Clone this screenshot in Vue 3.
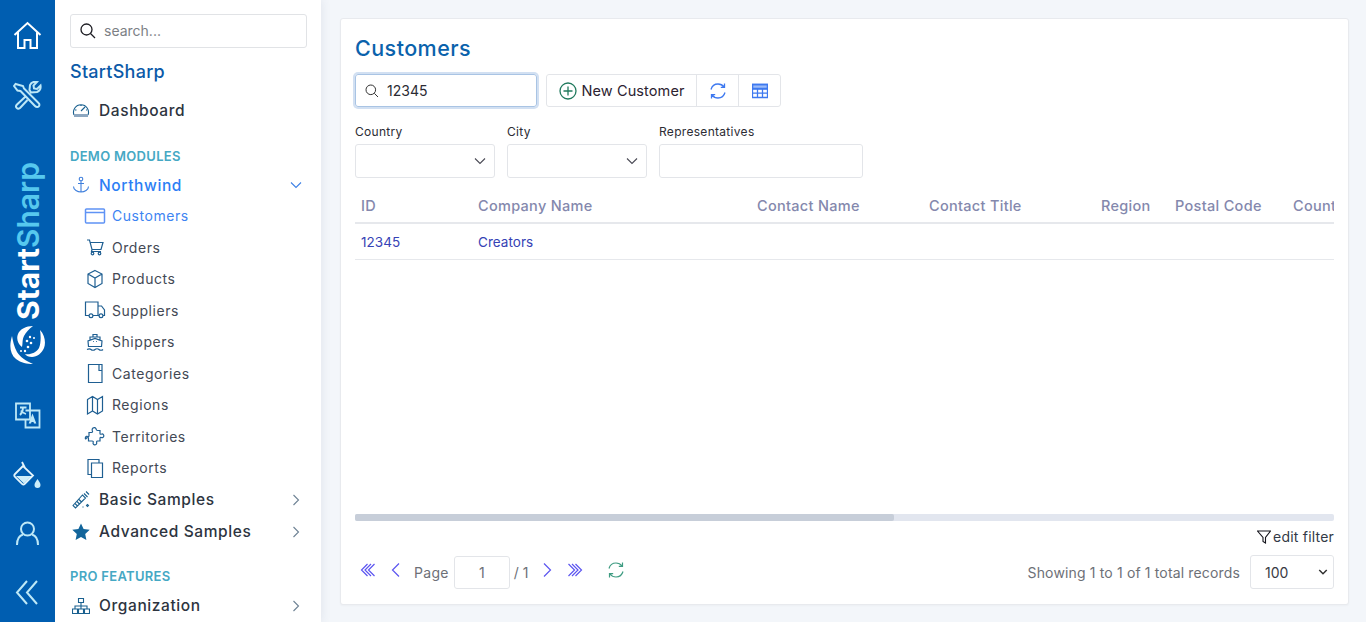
<script setup>
const subItems = [
  { label: 'Customers', active: true, d: 'M1.500 3h17a1 1 0 0 1 1 1v12a1 1 0 0 1-1 1h-17a1 1 0 0 1-1-1V4a1 1 0 0 1 1-1zM.5 6.500h19' },
  { label: 'Orders', d: 'M2 3h2.500l2.500 9.500h9l2-7H5M7 12.500l-.5 2H16', circles: [[7.500, 16.500, 1.300], [14.500, 16.500, 1.300]] },
  { label: 'Products', d: 'M10 1.500l7 3.500v9.500l-7 4-7-4V5zM3 5l7 4 7-4M10 9v9.500' },
  { label: 'Suppliers', d: 'M4 15.500H.5V2h12.500v13.500H8M13 6h3.500l3 4v5.500H18M13 15.500h1', circles: [[6, 15.800, 1.900], [16, 15.800, 1.900]] },
  { label: 'Shippers', d: 'M3.500 14.500L3 9l7-2.500L17 9l-.5 5.500zM5 8V5h10v3M8 5V2.500h4V5M8 9.500h.8M11.200 9.500h.8M2 17.500c2-1 3-1 4 0s3 1 4 0 3-1 4 0 3 1 4 0' },
  { label: 'Categories', d: 'M3.500 1.500h13.500v18H3.500zM14 1.500v6h3' },
  { label: 'Regions', d: 'M2.500 4.500l5-3 5 3 5-3V16l-5 3-5-3-5 3zM7.500 1.500V16M12.500 4.500V19' },
  { label: 'Territories', d: 'M8 2c1-.8 2.500-.5 3 .8.400 1 .2 1.700 1.500 1.700h2.500v3c0 1 1 .8 1.800.5 1.400-.3 2.200 1 2 2.200-.2 1.300-1.500 1.800-2.500 1.300-.8-.4-1.300 0-1.300 1v2.500h-2.500c-1 0-1 1-.8 1.800.2 1.300-1 2.200-2.200 2-1.300-.2-1.800-1.500-1.300-2.600.3-.8-.2-1.200-1-1.200H3.500v-2.500c0-1-1-1-1.700-.7C.5 14 0 12.500.5 11.300c.4-1 1.500-1.300 2.300-.8.700.4 1.200 0 1.200-.8V6.500h2.500c1.200 0 1.200-1 .8-1.800C6.900 3.800 7.200 2.700 8 2z' },
  { label: 'Reports', d: 'M6.500 16.500H3V1.500h11V5M6.500 5h11v14.500h-11z' },
]
const columns = [
  { title: 'ID', width: 117 },
  { title: 'Company Name', width: 279 },
  { title: 'Contact Name', width: 172 },
  { title: 'Contact Title', width: 172 },
  { title: 'Region', width: 74 },
  { title: 'Postal Code', width: 118 },
  { title: 'Country', width: 100 },
]
</script>

<template>
  <div class="app">
    <aside class="rail">
      <svg class="rail-ico home" viewBox="0 0 29 29"><path d="M1.500 14L14.500 2l13 12M5 11.500V27h6.500v-8h6v8H24V11.500" /></svg>
      <svg class="rail-ico tools" viewBox="0 0 29 29"><path d="M2.500 3L1 5l3.500 4.500 3 .5L22 25c3 3 6-1 3.500-3L11 7.500 10 5zM18 11.500l6-.5c2.500-1 4-3.500 3.500-6.500L24 8l-3-.5-.5-3L24 1c-3-.5-6 .5-7 3l-.5 5zM12 16L4 23.500c-2.500 2.500.5 5.500 3 3.500l7.500-8" /></svg>
      <div class="brand">
        <span class="brand-text"><b>Start</b><em>Sharp</em></span>
        <svg class="swirl" viewBox="0 0 36 38"><path d="M2 10C-1 20 0 28 6 33c5 4 11 5 17 5-7-3-13-7-16-12C4 21 3 15 2 10zM23 0C16 0 10 3 8 8c-2 5 0 10 4 13 1-4 0-7 2-11 2-4 5-7 9-10zM30 4c5 5 6 13 4 18-2 5-7 9-12 9-3 0-6-1-7-3 5 1 11-1 14-6 2-5 2-12 1-18z" /><circle cx="20" cy="11" r="1.200" /><circle cx="24" cy="12" r="1" /><circle cx="17" cy="15" r="1.300" /><circle cx="21" cy="17" r="1.300" /><circle cx="18" cy="21" r="1.300" /><circle cx="15" cy="25" r="1.200" /><circle cx="11" cy="25" r="1" /></svg>
      </div>
      <svg class="rail-ico lang" viewBox="0 0 29 29"><path d="M3 2.500h14v16H3zM12.500 9.500h14v17h-14v-8M7 6.500h6.500M10 6.500c0 3-1 5.500-3 7.500M8 9.500c1 2 3 3 5 3.500" /><path class="solid" d="M19.500 12.500l3.800 10h-2.300l-.5-1.500h-2l-.5 1.500h-2.300z" /></svg>
      <svg class="rail-ico paint" viewBox="0 0 29 29"><path class="solid" d="M3 15h15.500l-7.500 7.500zM24.500 18c2 3 3 4.500 3 6a3 3 0 0 1-6 0c0-1.500 1-3 3-6z" /><path d="M10 5L2 13c-.8.8-.8 2 0 2.800l7 7c.8.8 2 .8 2.800 0L20 14.500zM9 1l3 6" /></svg>
      <svg class="rail-ico user" viewBox="0 0 29 29"><circle cx="14.500" cy="10" r="6.500" /><path d="M4 26c0-6 2.500-9.500 6-10.500M25 26c0-6-2.500-9.500-6-10.500" /></svg>
      <svg class="rail-ico back" viewBox="0 0 29 29"><path d="M14 3L4 14.500 14 26M24 3L14 14.500 24 26" /></svg>
    </aside>

    <nav class="side">
      <div class="side-search">
        <svg class="search-ico" viewBox="0 0 16 16"><circle cx="6.500" cy="6.500" r="5.500" /><path d="M10.500 10.500L15 15" /></svg>
        <span>search...</span>
      </div>
      <div class="side-title">StartSharp</div>
      <div class="row top dash">
        <svg class="top-ico" viewBox="0 0 18 18"><path d="M2 14A7.500 7.500 0 1 1 16 14M9 10l4-4M3 9h1.500M9 3.500V5M14 9h1" /><path class="fill" d="M2 13h14v3H2z" /></svg>
        <span>Dashboard</span>
      </div>
      <div class="section demo">DEMO MODULES</div>
      <div class="row top open">
        <svg class="top-ico" viewBox="0 0 18 18"><circle cx="9" cy="3" r="1.800" /><path d="M9 5v11M6 7.500h6M1.500 10.500c0 3.500 4 5.500 7.500 5.500s7.500-2 7.500-5.500" /></svg>
        <span>Northwind</span>
        <svg class="chev" viewBox="0 0 12 12"><path d="M1 3.500L6 8.500 11 3.500" /></svg>
      </div>
      <div v-for="item in subItems" :key="item.label" class="row sub" :class="{ active: item.active }">
        <svg class="sub-ico" viewBox="0 0 20 20">
          <path :d="item.d" />
          <circle v-for="c in item.circles || []" :key="c[0]" :cx="c[0]" :cy="c[1]" :r="c[2]" />
        </svg>
        <span>{{ item.label }}</span>
      </div>
      <div class="row top basic">
        <svg class="top-ico" viewBox="0 0 18 18"><path d="M1 14.500L10.500 4l3 3L3.500 17zM3 12.500l2.500 2.500M5 10.500l2.500 2.500M7 8.500l2.500 2.500M12 2.500l3.500 3.500M14 .5l3 3M14.500 14.500l1-1 1 1-1 1zM11 15.500v1" /></svg>
        <span>Basic Samples</span>
        <svg class="chev" viewBox="0 0 12 12"><path d="M3.500 1L8.500 6 3.500 11" /></svg>
      </div>
      <div class="row top adv">
        <svg class="top-ico star" viewBox="0 0 18 18"><path d="M9 .5l2.600 5.600 6.100.7-4.500 4.200 1.200 6L9 14l-5.400 3 1.200-6L.3 6.800l6.100-.7z" /></svg>
        <span>Advanced Samples</span>
        <svg class="chev" viewBox="0 0 12 12"><path d="M3.500 1L8.500 6 3.500 11" /></svg>
      </div>
      <div class="section pro">PRO FEATURES</div>
      <div class="row top org">
        <svg class="top-ico" viewBox="0 0 18 18"><path d="M6.500 1.500h5v4h-5zM.5 12h5v4.500h-5zM6.500 12h5v4.500h-5zM12.500 12h5v4.500h-5zM9 5.500V12M3 12V9h12v3" /></svg>
        <span>Organization</span>
        <svg class="chev" viewBox="0 0 12 12"><path d="M3.500 1L8.500 6 3.500 11" /></svg>
      </div>
    </nav>

    <main class="main">
      <section class="card">
        <h1 class="title">Customers</h1>
        <div class="toolbar">
          <div class="quick">
            <svg viewBox="0 0 14 14"><circle cx="5.800" cy="5.800" r="4.800" /><path d="M9.300 9.300L13 13" /></svg>
            <span>12345</span>
          </div>
          <div class="btns">
            <div class="btn new">
              <svg viewBox="0 0 18 18"><circle cx="9" cy="9" r="8" /><path d="M9 4.500v9M4.500 9h9" /></svg>
              <span>New Customer</span>
            </div>
            <div class="btn ico">
              <svg viewBox="0 0 16 16"><path d="M1 6.500C2 3 5 1 8 1c2.500 0 4.500 1 6 3M14.500.500V4.300H10.800M15 9.500c-1 3.500-4 5.500-7 5.500-2.500 0-4.500-1-6-3M1.500 15.500V11.700H5.200" /></svg>
            </div>
            <div class="btn ico">
              <svg viewBox="0 0 16 14"><path class="head" d="M.5.500h15v4H.5z" /><path d="M.5.500h15v13H.5zM.5 5h15M.5 9.200h15M5.500 5v8.500M10.500 5v8.500" /></svg>
            </div>
          </div>
        </div>
        <div class="filters">
          <div class="field w140">
            <label>Country</label>
            <div class="box"><svg viewBox="0 0 12 8"><path d="M1 1.500L6 6.500 11 1.500" /></svg></div>
          </div>
          <div class="field w140">
            <label>City</label>
            <div class="box"><svg viewBox="0 0 12 8"><path d="M1 1.500L6 6.500 11 1.500" /></svg></div>
          </div>
          <div class="field w204">
            <label>Representatives</label>
            <div class="box"></div>
          </div>
        </div>
        <div class="grid">
          <div class="grid-head">
            <div v-for="col in columns" :key="col.title" class="cell" :style="{ width: col.width + 'px' }">{{ col.title }}</div>
          </div>
          <div class="grid-row">
            <div class="cell link" style="width: 117px">12345</div>
            <div class="cell link" style="width: 279px">Creators</div>
          </div>
          <div class="grid-body"></div>
          <div class="hscroll"><div class="thumb"></div></div>
        </div>
        <div class="edit-filter">
          <svg viewBox="0 0 14 14"><path d="M.5 1h13L8.500 7.500V13L6 11.500v-4z" /></svg>
          <span>edit filter</span>
        </div>
        <div class="pager">
          <div class="pager-left">
            <svg class="pg dbl" viewBox="0 0 16 16"><path d="M7.500 2L1.500 8l6 6M11 2L5 8l6 6M14.500 2l-6 6 6 6" /></svg>
            <svg class="pg one" viewBox="0 0 16 16"><path d="M11 1.500L4.500 8l6.500 6.500" /></svg>
            <span class="pg-label">Page</span>
            <div class="pg-input">1</div>
            <span class="pg-of">/ 1</span>
            <svg class="pg one next" viewBox="0 0 16 16"><path d="M5 1.500L11.500 8 5 14.500" /></svg>
            <svg class="pg dbl last" viewBox="0 0 16 16"><path d="M1.500 2l6 6-6 6M5 2l6 6-6 6M8.500 2l6 6-6 6" /></svg>
            <svg class="pg reload" viewBox="0 0 16 16"><path d="M1 6.500C2 3 5 1 8 1c2.500 0 4.500 1 6 3M14.500.500V4.300H10.800M15 9.500c-1 3.500-4 5.500-7 5.500-2.500 0-4.500-1-6-3M1.500 15.500V11.700H5.200" /></svg>
          </div>
          <div class="pager-right">
            <span class="stats">Showing 1 to 1 of 1 total records</span>
            <div class="size">
              <span>100</span>
              <svg viewBox="0 0 12 8"><path d="M1.500 1.500L6 6l4.500-4.500" /></svg>
            </div>
          </div>
        </div>
      </section>
    </main>
  </div>
</template>

<style>
html, body { margin: 0; overflow: hidden; }
</style>

<style scoped>
* { box-sizing: border-box; }
.app { display: flex; height: 622px; width: 1366px; overflow: hidden; background: #f3f6fa; font-family: Inter, "Liberation Sans", sans-serif; color: #2f3542; }
svg { display: block; fill: none; stroke-width: 1.3; flex: none; }

.rail { width: 55px; flex: none; background: #005eb1; display: flex; flex-direction: column; align-items: center; padding-top: 21px; }
.rail-ico { width: 29px; height: 29px; stroke: #d9f1fb; stroke-width: 2; }
.home { stroke: #fff; }
.tools { margin-top: 31px; stroke: #bde8f7; stroke-width: 2; }
.brand { margin-top: 53px; display: flex; flex-direction: column; align-items: center; height: 201px; }
.brand-text { writing-mode: vertical-rl; transform: rotate(180deg); font-size: 30px; font-weight: 600; line-height: 34px; height: 157px; white-space: nowrap; }
.brand-text b { color: #fff; font-weight: 700; }
.brand-text em { color: #56c8ee; font-style: normal; font-weight: 600; }
.swirl { width: 36px; height: 38px; margin-top: 6px; fill: #fff; stroke: none; }
.lang { margin-top: 37px; stroke: #bde8f7; stroke-width: 1.800; }
.lang .solid { fill: #bde8f7; stroke: none; }
.paint { margin-top: 31px; stroke: #e4f5fc; stroke-width: 1.800; }
.paint .solid { fill: #cdeefa; stroke: none; }
.user { margin-top: 29px; stroke: #bde8f7; }
.back { margin-top: 30px; stroke: #bde8f7; }

.side { width: 266px; flex: none; background: #fff; box-shadow: 2px 0 8px rgba(60, 80, 110, .08); padding: 14px 14px 0 15px; overflow: hidden; position: relative; }
.side-search { height: 34px; border: 1px solid #e1e3e6; border-radius: 3px; display: flex; align-items: center; padding-left: 9px; gap: 8px; color: #7c7f85; font-size: 14px; }
.side-search span { padding-bottom: 2px; }
.search-ico { width: 16px; height: 16px; stroke: #1c1c22; stroke-width: 1.300; }
.side-title { font-size: 18px; color: #0b5aa8; margin-top: 12px; line-height: 24px; font-weight: 500; letter-spacing: .25px; }
.row { display: flex; align-items: center; position: relative; }
.top { height: 32px; padding-left: 2px; gap: 9px; font-size: 15.5px; font-weight: 450; color: #2d3440; letter-spacing: .6px; }
.dash { margin-top: 10px; }
.top-ico { width: 18px; height: 18px; stroke: #19608f; stroke-width: 1.1; }
.top-ico .fill { fill: #8da7c0; stroke: none; }
.star { fill: #12659b; stroke: none; }
.open { color: #2c7ef5; margin-top: 5px; height: 30px; }
.open .top-ico { stroke: #3f7fdc; }
.chev { position: absolute; right: 5px; width: 12px; height: 12px; stroke: #6e8294; stroke-width: 1.1; }
.open .chev { stroke: #3d80e6; }
.section { font-size: 13px; font-weight: 600; color: #45a8c4; line-height: 18px; letter-spacing: .3px; }
.demo { margin-top: 21px; }
.pro { margin-top: 19px; }
.org { margin-top: 6px; height: 30px; }
.sub { height: 31.5px; padding-left: 15px; gap: 7px; font-size: 14px; color: #434955; letter-spacing: .55px; }
.sub-ico { width: 20px; height: 20px; stroke: #1f5f92; stroke-width: 1.2; overflow: visible; }
.sub.active { color: #3d84f2; }
.sub.active .sub-ico { stroke: #5f93f5; stroke-width: 1.500; }

.main { flex: 1; padding: 18px 17px 17px 19px; min-width: 0; }
.card { height: 587px; background: #fff; border: 1px solid #e8eaee; border-radius: 3px; padding: 14px 14px 0; box-shadow: 0 1px 2px rgba(0, 0, 0, .03); overflow: hidden; }
.title { margin: 0; font-size: 21.5px; line-height: 31px; font-weight: 500; color: #0a62ac; letter-spacing: .45px; }
.toolbar { display: flex; gap: 9px; margin-top: 10px; }
.quick { width: 182px; height: 33px; border: 1px solid #a9c4e4; border-radius: 3px; box-shadow: 0 0 0 2px #d2e0f2; display: flex; align-items: center; padding-left: 9px; gap: 8px; font-size: 14px; color: #2b2b33; }
.quick svg { width: 14px; height: 14px; stroke: #333; stroke-width: 1; }
.btns { display: flex; height: 33px; border: 1px solid #e3e5e9; border-radius: 3px; }
.btn { display: flex; align-items: center; justify-content: center; }
.new { width: 149px; gap: 5px; font-size: 14.5px; color: #2b2230; letter-spacing: .1px; }
.new svg { width: 18px; height: 18px; stroke: #217a5e; }
.ico { width: 42px; border-left: 1px solid #e3e5e9; }
.ico svg { width: 16px; height: 16px; stroke: #3e79f0; stroke-width: 1.3; }
.head { fill: #9bbbf8; }
.filters { display: flex; gap: 12px; margin-top: 16px; }
.field label { display: block; font-size: 12px; line-height: 18px; color: #2c2c34; letter-spacing: .3px; }
.box { height: 34px; margin-top: 3px; border: 1px solid #e3e5e9; border-radius: 3px; display: flex; align-items: center; justify-content: flex-end; padding-right: 8px; }
.box svg { width: 12px; height: 8px; stroke: #4a4a55; stroke-width: 1.1; }
.w140 { width: 140px; }
.w204 { width: 204px; }
.grid { margin-top: 11px; overflow: hidden; width: 979px; }
.grid-head { display: flex; height: 35px; border-bottom: 2px solid #e6e8ec; font-size: 14.5px; font-weight: 500; color: #8488ad; white-space: nowrap; letter-spacing: .3px; }
.cell { flex: none; padding-left: 6px; display: flex; align-items: center; }
.grid-row { display: flex; height: 36px; border-bottom: 1px solid #e6e8ec; font-size: 13.5px; letter-spacing: .05px; }
.link { color: #3642b5; }
.grid-body { height: 254px; }
.hscroll { height: 7px; background: #e2e6ef; border-radius: 2px; }
.thumb { width: 539px; height: 7px; background: #c7ced9; border-radius: 2px; }
.edit-filter { display: flex; justify-content: flex-end; align-items: center; gap: 2px; margin-top: 6px; width: 979px; font-size: 14px; line-height: 20px; color: #333a46; letter-spacing: .2px; }
.edit-filter svg { width: 14px; height: 14px; stroke: #15151c; stroke-width: 1.1; }
.pager { display: flex; justify-content: space-between; align-items: center; width: 979px; margin-top: 8px; height: 34px; }
.pager-left { display: flex; align-items: center; font-size: 14px; color: #6d7077; }
.pg { width: 16px; height: 16px; stroke: #5c55f0; stroke-width: 1.2; position: relative; top: -2px; }
.dbl { margin-left: 5px; }
.one { margin-left: 12px; }
.pg-label { margin-left: 10px; letter-spacing: .3px; }
.pg-input { width: 56px; height: 33px; border: 1px solid #e3e5e9; border-radius: 3px; margin-left: 5px; display: flex; align-items: center; justify-content: center; }
.pg-of { margin-left: 4px; }
.next { margin-left: 11px; }
.last { margin-left: 12px; }
.reload { margin-left: 25px; stroke: #3f9c82; }
.pager-right { display: flex; align-items: center; gap: 10px; font-size: 14px; color: #6d7077; }
.stats { letter-spacing: .15px; }
.size { width: 84px; height: 34px; border: 1px solid #e3e5e9; border-radius: 3px; display: flex; align-items: center; justify-content: space-between; padding: 0 5px 0 14px; color: #3a3a44; }
.size svg { width: 10px; height: 8px; stroke: #333; stroke-width: 1.800; }
</style>
